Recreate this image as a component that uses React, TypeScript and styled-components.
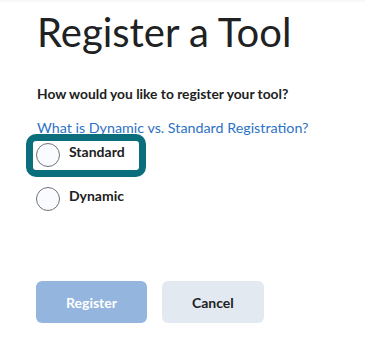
import styled, { createGlobalStyle } from "styled-components";

const GlobalStyle = createGlobalStyle`
  body {
    margin: 0;
    background: #ffffff;
    font-family: Lato, "Open Sans", sans-serif;
    color: #202122;
  }
`;

const TopStrip = styled.div`
  height: 2px;
  background: #f8f8f8;
`;

const Page = styled.div`
  padding: 0 0 0 37px;
`;

const Title = styled.h1`
  margin: 6px 0 0 0;
  font-size: 40px;
  font-weight: 400;
  line-height: 48px;
  color: #202122;
`;

const Question = styled.p`
  margin: 28px 0 0 0;
  font-size: 13.8px;
  font-weight: 700;
  line-height: 20px;
`;

const HelpLink = styled.a`
  display: block;
  margin-top: 14px;
  font-size: 14.3px;
  line-height: 20px;
  color: #2d72c5;
  text-decoration: none;
`;

const Options = styled.div`
  display: flex;
  flex-direction: column;
  gap: 15px;
  margin-top: 3px;
`;

const Option = styled.label<{ $focused?: boolean }>`
  display: flex;
  align-items: flex-start;
  gap: 9px;
  width: fit-content;
  margin-left: -4px;
  padding: 2px 14px 3px 3px;
  border-radius: 3px;
  outline: ${(p) => (p.$focused ? "7px solid #0b6e7d" : "none")};
`;

const Circle = styled.span`
  box-sizing: border-box;
  width: 24px;
  height: 24px;
  border-radius: 50%;
  border: 1px solid #6e7377;
  background: #f9fbff;
  flex: none;
`;

const OptionText = styled.span`
  font-size: 14px;
  font-weight: 700;
  line-height: 17px;
`;

const Actions = styled.div`
  display: flex;
  gap: 15px;
  margin: 67px 0 0 -1px;
`;

const Button = styled.button<{ $primary?: boolean }>`
  height: 42px;
  padding: 0 30px;
  border: none;
  border-radius: 6px;
  font-family: Lato, "Open Sans", sans-serif;
  font-size: 14px;
  font-weight: 700;
  background: ${(p) => (p.$primary ? "#93b5de" : "#e3e9f1")};
  color: ${(p) => (p.$primary ? "#ffffff" : "#202122")};
`;

const App = () => {
  return (
    <>
      <GlobalStyle />
      <TopStrip />
      <Page>
        <Title>Register a Tool</Title>
        <Question>How would you like to register your tool?</Question>
        <HelpLink href="#">What is Dynamic vs. Standard Registration?</HelpLink>
        <Options>
          <Option $focused>
            <Circle />
            <OptionText>Standard</OptionText>
          </Option>
          <Option>
            <Circle />
            <OptionText>Dynamic</OptionText>
          </Option>
        </Options>
        <Actions>
          <Button $primary>Register</Button>
          <Button>Cancel</Button>
        </Actions>
      </Page>
    </>
  );
};

export default App;
